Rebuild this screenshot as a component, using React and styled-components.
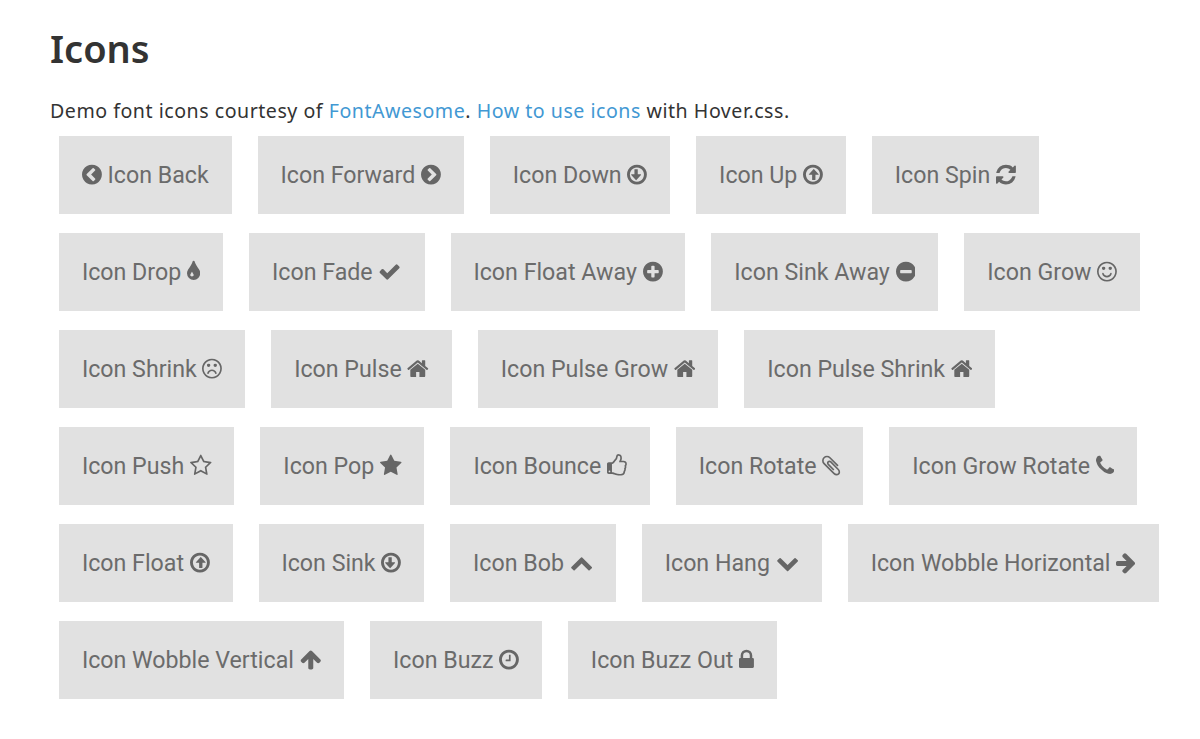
import React from "react";
import styled, { createGlobalStyle } from "styled-components";

const Global = createGlobalStyle`
  html, body {
    margin: 0;
    background: #fff;
  }
`;

const Page = styled.div`
  width: 1200px;
  height: 739px;
  box-sizing: border-box;
  padding: 23px 30px 0 50px;
  overflow: hidden;
  color: #333;
  font-family: "Noto Sans", sans-serif;
`;
const Title = styled.h1`
  margin: 0;
  font-size: 38px;
  line-height: 50px;
  font-weight: 600;
`;
const Intro = styled.p`
  margin: 24px 0 0;
  font-size: 19.6px;
  line-height: 28px;
  letter-spacing: 0.52px;
`;
const Link = styled.a`
  color: #4298d3;
  text-decoration: none;
`;
const Grid = styled.div`
  display: flex;
  flex-wrap: wrap;
  gap: 19px 26px;
  margin: 11px 0 0 9px;
`;
const Button = styled.a`
  display: block;
  padding: 23.5px 22.9px;
  background: #e1e1e1;
  color: #6b6b6b;
  font-family: Roboto, sans-serif;
  font-size: 23.2px;
  line-height: 31px;
  white-space: nowrap;
`;
const Glyph = styled.svg`
  display: inline-block;
  height: 1em;
  vertical-align: -0.143em;
  fill: #666;
`;

const RING_O =
  "M1440 896q0-148-73-273t-198-198-273-73-273 73-198 198-73 273 73 273 198 198 273 73 273-73 198-198 73-273zM1664 896q0 209-103 385.5t-279.5 279.5-385.5 103-385.5-103-279.5-279.5-103-385.5 103-385.5 279.5-279.5 385.5-103 385.5 103 279.5 279.5 103 385.5z";
const DISC =
  "M1664 896q0 209-103 385.5t-279.5 279.5-385.5 103-385.5-103-279.5-279.5-103-385.5 103-385.5 279.5-279.5 385.5-103 385.5 103 279.5 279.5 103 385.5z";
const FACE =
  "M1152 640q0 53-37.5 90.5t-90.5 37.5-90.5-37.5-37.5-90.5 37.5-90.5 90.5-37.5 90.5 37.5 37.5 90.5zM640 640q0 53-37.5 90.5t-90.5 37.5-90.5-37.5-37.5-90.5 37.5-90.5 90.5-37.5 90.5 37.5 37.5 90.5zM1408 896q0-130-51-248.5t-136.5-204-204-136.5-248.5-51-248.5 51-204 136.5-136.5 204-51 248.5 51 248.5 136.5 204 204 136.5 248.5 51 248.5-51 204-136.5 136.5-204 51-248.5zM1536 896q0 209-103 385.5t-279.5 279.5-385.5 103-385.5-103-279.5-279.5-103-385.5 103-385.5 279.5-279.5 385.5-103 385.5 103 279.5 279.5 103 385.5z";
const HOME =
  "M1472 992v480q0 26-19 45t-45 19h-384v-384h-256v384h-384q-26 0-45-19t-19-45v-480q0-1 .5-3t.5-3l575-474 575 474q1 2 1 6zm223-69l-62 74q-8 9-21 11h-3q-13 0-21-7l-692-577-692 577q-12 8-24 7-13-2-21-11l-62-74q-8-10-7-23.5t11-21.5l719-599q32-26 76-26t76 26l244 204v-195q0-14 9-23t23-9h192q14 0 23 9t9 23v408l219 182q10 8 11 21.5t-7 23.5z";
const ARROW_O_DOWN =
  "M1212 897q8 19-5 35l-350 384q-10 10-23 10-14 0-24-10l-355-384q-13-16-5-35 9-19 29-19h224v-368q0-14 9-23t23-9h192q14 0 23 9t9 23v368h224q21 0 29 19z";

// glyphs from the Font Awesome 4 set, [advance, x offset, path]
const icons = {
  back: [1536, 128, "M1037 1395l102-102q19-19 19-45t-19-45l-307-307 307-307q19-19 19-45t-19-45l-102-102q-19-19-45-19t-45 19l-454 454q-19 19-19 45t19 45l454 454q19 19 45 19t45-19z" + DISC],
  forward: [1536, 128, "M845 1395l454-454q19-19 19-45t-19-45l-454-454q-19-19-45-19t-45 19l-102 102q-19 19-19 45t19 45l307 307-307 307q-19 19-19 45t19 45l102 102q19 19 45 19t45-19z" + DISC],
  down: [1536, 128, ARROW_O_DOWN + RING_O, false],
  up: [1536, 128, ARROW_O_DOWN + RING_O, true],
  spin: [1536, 128, "M1639 1056q0 5-1 7-64 268-268 434.5t-478 166.5q-146 0-282.5-55t-243.5-157l-129 129q-19 19-45 19t-45-19-19-45v-448q0-26 19-45t45-19h448q26 0 45 19t19 45-19 45l-137 137q71 66 161 102t187 36q134 0 250-65t186-179q11-17 53-117 8-23 30-23h192q13 0 22.5 9.5t9.5 22.5zm25-800v448q0 26-19 45t-45 19h-448q-26 0-45-19t-19-45 19-45l138-138q-148-137-349-137-134 0-250 65t-186 179q-11 17-53 117-8 23-30 23h-199q-13 0-22.5-9.5t-9.5-22.5v-7q65-268 270-434.5t480-166.5q146 0 284 55.5t245 156.5l130-129q19-19 45-19t45 19 19 45z"],
  drop: [1024, 384, "M896 1152q0-36-20-69-1-1-15.5-22.5t-25.5-38-25-44-21-50.5q-4-16-21-16t-21 16q-7 23-21 50.5t-25 44-25.5 38-15.5 22.5q-20 33-20 69 0 53 37.5 90.5t90.5 37.5 90.5-37.5 37.5-90.5zm512-128q0 212-150 362t-362 150-362-150-150-362q0-145 81-275 6-9 62.5-90.5t101-151 99.5-178 83-201.5q9-30 34-47t51-17 51.5 17 33.5 47q28 93 83 201.5t99.5 178 101 151 62.5 90.5q81 127 81 275z"],
  check: [1792, 0, "M1671 566q0 40-28 68l-724 724-136 136q-28 28-68 28t-68-28l-136-136-362-362q-28-28-28-68t28-68l136-136q28-28 68-28t68 28l294 295 656-657q28-28 68-28t68 28l136 136q28 28 28 68z"],
  plus: [1536, 128, "M1344 960v-128q0-26-19-45t-45-19h-256v-256q0-26-19-45t-45-19h-128q-26 0-45 19t-19 45v256h-256q-26 0-45 19t-19 45v128q0 26 19 45t45 19h256v256q0 26 19 45t45 19h128q26 0 45-19t19-45v-256h256q26 0 45-19t19-45z" + DISC],
  minus: [1536, 128, "M1344 960v-128q0-26-19-45t-45-19h-768q-26 0-45 19t-19 45v128q0 26 19 45t45 19h768q26 0 45-19t19-45z" + DISC],
  smile: [1536, 0, "M1134 1075q-37 121-138 195t-228 74-228-74-138-195q-8-25 4-48.5t38-31.5q25-8 48.5 4t31.5 38q25 80 92.5 129.5t151.5 49.5 151.5-49.5 92.5-129.5q8-26 32-38t49-4 37 31.5 4 48.5z" + FACE],
  frown: [1536, 0, "M1134 1229q8 25-4 48.5t-37 31.5-49-4-32-38q-25-80-92.5-129.5t-151.5-49.5-151.5 49.5-92.5 129.5q-8 26-31.5 38t-48.5 4q-26-8-38-31.5t-4-48.5q37-121 138-195t228-74 228 74 138 195z" + FACE],
  home: [1664, 64, HOME],
  starO: [1664, 64, "M1201 1004l306-297-422-62-189-382-189 382-422 62 306 297-73 421 378-199 377 199zm527-357q0 22-26 48l-363 354 86 500q1 7 1 20 0 50-41 50-19 0-40-12l-449-236-449 236q-22 12-40 12-21 0-31.5-14.5t-10.5-35.5q0-6 2-20l86-500-364-354q-25-27-25-48 0-37 56-46l502-73 225-455q19-41 49-41t49 41l225 455 502 73q56 9 56 46z"],
  star: [1664, 64, "M1728 647q0 22-26 48l-363 354 86 500q1 7 1 20 0 21-10.5 35.5t-30.5 14.5q-19 0-40-12l-449-236-449 236q-22 12-40 12-21 0-31.5-14.5t-10.5-35.5q0-6 2-20l86-500-364-354q-25-27-25-48 0-37 56-46l502-73 225-455q19-41 49-41t49 41l225 455 502 73q56 9 56 46z"],
  thumb: [1536, 128, "M384 1344q0-26-19-45t-45-19-45 19-19 45 19 45 45 19 45-19 19-45zm1152-576q0-51-39-89.5t-89-38.5h-352q0-58 48-159.5t48-160.5q0-98-32-145t-128-47q-26 26-38 85t-30.5 125.5-59.5 109.5q-22 23-77 91-4 5-23 30t-31.5 41-34.5 42.5-40 44-38.5 35.5-40 27-35.5 9h-32v640h32q13 0 31.5 3t33 6.5 38 11 35 11.5 35.5 12.5 29 10.5q211 73 342 73h121q192 0 192-167 0-26-5-56 30-16 47.5-52.5t17.5-73.5-18-69q53-50 53-119 0-25-10-55.5t-25-47.5q32-1 53.5-47t21.5-81zm128-1q0 89-49 163 9 33 9 69 0 77-38 144 3 21 3 43 0 101-60 178 1 139-85 219.5t-227 80.5h-129q-96 0-189.5-22.5t-216.5-65.5q-116-40-138-40h-288q-53 0-90.5-37.5t-37.5-90.5v-640q0-53 37.5-90.5t90.5-37.5h274q36-24 137-155 58-75 107-128 24-25 35.5-85.5t30.5-126.5 62-108q39-37 90-37 84 0 151 32.5t102 101.5 35 186q0 93-48 192h176q104 0 180 76t76 179z"],
  clip: [1408, 192, "M1596 1385q0 117-79 196t-196 79q-135 0-235-100l-777-776q-113-115-113-271 0-159 110-270t269-111q158 0 273 113l605 606q10 10 10 22 0 16-30.5 46.5t-46.5 30.5q-13 0-23-10l-606-607q-79-77-181-77-106 0-179 75t-73 181q0 105 76 181l776 777q63 63 145 63 64 0 106-42t42-106q0-82-63-145l-581-581q-26-24-60-24-29 0-48 19t-19 48q0 32 25 59l410 410q10 10 10 22 0 16-31 47t-47 31q-12 0-22-10l-410-410q-63-61-63-149 0-82 57-139t139-57q88 0 149 63l581 581q100 98 100 235z"],
  phone: [1408, 192, "M1600 1240q0 27-10 70.5t-21 68.5q-21 50-122 106-94 51-186 51-27 0-53-3.5t-57.5-12.5-47-14.5-55.5-20.5-49-18q-98-35-175-83-127-79-264-216t-216-264q-48-77-83-175-3-9-18-49t-20.5-55.5-14.5-47-12.5-57.5-3.5-53q0-92 51-186 56-101 106-122 25-11 68.5-21t70.5-10q14 0 21 3 18 6 53 76 11 19 30 54t35 63.5 31 53.5q3 4 17.5 25t21.5 35.5 7 28.5q0 20-28.5 50t-62 55-62 53-28.5 46q0 9 5 22.5t8.5 20.5 14 24 11.5 19q76 137 174 235t235 174q2 1 19 11.5t24 14 20.5 8.5 22.5 5q18 0 46-28.5t53-62 55-62 50-28.5q14 0 28.5 7t35.5 21.5 25 17.5q25 15 53.5 31t63.5 35 54 30q70 35 76 53 3 7 3 21z"],
  chevronUp: [1792, 0, "M1683 1331l-166 165q-19 19-45 19t-45-19l-531-531-531 531q-19 19-45 19t-45-19l-166-165q-19-19-19-45.5t19-45.5l742-741q19-19 45-19t45 19l742 741q19 19 19 45.5t-19 45.5z"],
  chevronDown: [1792, 0, "M1683 808l-742 741q-19 19-45 19t-45-19l-742-741q-19-19-19-45.5t19-45.5l166-165q19-19 45-19t45 19l531 531 531-531q19-19 45-19t45 19l166 165q19 19 19 45.5t-19 45.5z"],
  arrowRight: [1536, 128, "M1600 960q0 54-37 91l-651 651q-39 37-91 37-51 0-90-37l-75-75q-38-38-38-91t38-91l293-293h-704q-52 0-84.5-37.5t-32.5-90.5v-128q0-53 32.5-90.5t84.5-37.5h704l-293-294q-38-36-38-90t38-90l75-75q38-38 90-38 53 0 91 38l651 651q37 35 37 90z"],
  arrowUp: [1664, 64, "M1675 971q0 51-37 90l-75 75q-38 38-91 38-54 0-90-38l-294-293v704q0 52-37.5 84.5t-90.5 32.5h-128q-53 0-90.5-32.5t-37.5-84.5v-704l-294 293q-36 38-90 38t-90-38l-75-75q-38-38-38-90 0-53 38-91l651-651q35-37 90-37 54 0 91 37l651 651q37 39 37 91z"],
  clock: [1536, 128, "M1024 544v448q0 14-9 23t-23 9h-320q-14 0-23-9t-9-23v-64q0-14 9-23t23-9h224v-352q0-14 9-23t23-9h64q14 0 23 9t9 23z" + RING_O],
  lock: [1152, 320, "M640 768h512v-192q0-106-75-181t-181-75-181 75-75 181v192zm832 96v576q0 40-28 68t-68 28h-960q-40 0-68-28t-28-68v-576q0-40 28-68t68-28h32v-192q0-184 132-316t316-132 316 132 132 316v192h32q40 0 68 28t28 68z"],
};

function Icon({ name }) {
  const [advance, offset, d, flip] = icons[name];
  return (
    <Glyph viewBox={`${offset} 0 ${advance} 1792`} width={`${advance / 1792}em`}>
      {flip ? (
        <>
          <path d={RING_O} />
          <path d={ARROW_O_DOWN} transform="rotate(180 896 896)" />
        </>
      ) : (
        <path d={d} />
      )}
    </Glyph>
  );
}

const buttons = [
  ["Icon Back", "back", true],
  ["Icon Forward", "forward"],
  ["Icon Down", "down"],
  ["Icon Up", "up"],
  ["Icon Spin", "spin"],
  ["Icon Drop", "drop"],
  ["Icon Fade", "check"],
  ["Icon Float Away", "plus"],
  ["Icon Sink Away", "minus"],
  ["Icon Grow", "smile"],
  ["Icon Shrink", "frown"],
  ["Icon Pulse", "home"],
  ["Icon Pulse Grow", "home"],
  ["Icon Pulse Shrink", "home"],
  ["Icon Push", "starO"],
  ["Icon Pop", "star"],
  ["Icon Bounce", "thumb"],
  ["Icon Rotate", "clip"],
  ["Icon Grow Rotate", "phone"],
  ["Icon Float", "up"],
  ["Icon Sink", "down"],
  ["Icon Bob", "chevronUp"],
  ["Icon Hang", "chevronDown"],
  ["Icon Wobble Horizontal", "arrowRight"],
  ["Icon Wobble Vertical", "arrowUp"],
  ["Icon Buzz", "clock"],
  ["Icon Buzz Out", "lock"],
];

export default function App() {
  return (
    <Page>
      <Global />
      <Title>Icons</Title>
      <Intro>
        Demo font icons courtesy of <Link>FontAwesome</Link>.{" "}
        <Link>How to use icons</Link> with Hover.css.
      </Intro>
      <Grid>
        {buttons.map(([label, icon, before]) => (
          <Button key={label}>
            {before ? (
              <>
                <Icon name={icon} /> {label}
              </>
            ) : (
              <>
                {label} <Icon name={icon} />
              </>
            )}
          </Button>
        ))}
      </Grid>
    </Page>
  );
}
